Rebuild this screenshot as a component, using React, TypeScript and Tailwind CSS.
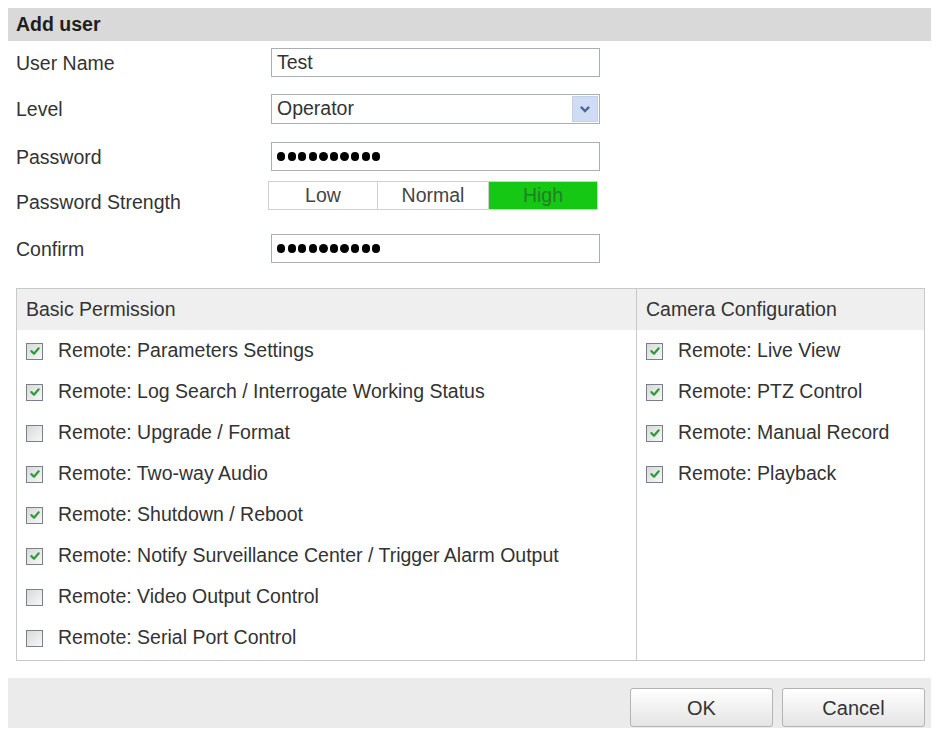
import React from "react";

const basic: [string, boolean][] = [
  ["Remote: Parameters Settings", true],
  ["Remote: Log Search / Interrogate Working Status", true],
  ["Remote: Upgrade / Format", false],
  ["Remote: Two-way Audio", true],
  ["Remote: Shutdown / Reboot", true],
  ["Remote: Notify Surveillance Center / Trigger Alarm Output", true],
  ["Remote: Video Output Control", false],
  ["Remote: Serial Port Control", false],
];

const camera: [string, boolean][] = [
  ["Remote: Live View", true],
  ["Remote: PTZ Control", true],
  ["Remote: Manual Record", true],
  ["Remote: Playback", true],
];

function CheckBox({ checked }: { checked: boolean }) {
  return (
    <span className="flex h-[17px] w-[17px] shrink-0 items-center justify-center border border-[#75818f] bg-linear-to-br from-[#d9d9d9] to-[#f7f7f7]">
      {checked && (
        <svg viewBox="0 0 12 12" className="h-[12px] w-[12px]">
          <path d="M2.4 6.1 L5 8.7 L9.7 3.3" fill="none" stroke="#2e9b3b" strokeWidth="2.2" strokeLinecap="round" strokeLinejoin="round" />
        </svg>
      )}
    </span>
  );
}

function Dots() {
  return (
    <div className="flex items-center gap-[2.4px] pl-[5px]">
      {Array.from({ length: 10 }).map((_, i) => (
        <span key={i} className="h-[8.2px] w-[8.2px] rounded-full bg-black" />
      ))}
    </div>
  );
}

function PermRow({ label, checked }: { label: string; checked: boolean }) {
  return (
    <div className="flex h-[41px] items-center gap-[15px] pl-[9px] pt-[1px]">
      <CheckBox checked={checked} />
      <span>{label}</span>
    </div>
  );
}

export default function App() {
  return (
    <div className="min-h-[731px] w-[937px] bg-white font-['Liberation_Sans',Arial,sans-serif] text-[19.5px] text-[#333]">
      <div className="pt-2">
        <div className="ml-2 flex h-[33px] w-[923px] items-center bg-[#d9d9d9] pl-2 font-bold text-[#1e1e1e]">
          Add user
        </div>
      </div>

      <div className="pl-4">
        <div className="mt-[7px] flex h-[29px] items-center">
          <span className="w-[255px] pt-[2px]">User Name</span>
          <div className="flex h-[29px] w-[329px] items-center border border-[#a9aeb4] pl-[5px]">Test</div>
        </div>

        <div className="mt-[17px] flex h-[30px] items-center">
          <span className="w-[255px] pt-[2px]">Level</span>
          <div className="flex h-[30px] w-[329px] items-center justify-between border border-[#a9aeb4] pl-[5px] pr-[1px]">
            <span>Operator</span>
            <span className="flex h-[26px] w-[26px] items-center justify-center border border-[#c3d0ea] bg-[#d0dcf3]">
              <svg viewBox="0 0 10 10" className="h-[12px] w-[12px]">
                <path d="M1.6 3.3 L5 6.7 L8.4 3.3" fill="none" stroke="#4a6698" strokeWidth="2" />
              </svg>
            </span>
          </div>
        </div>

        <div className="mt-[18px] flex h-[29px] items-center">
          <span className="w-[255px] pt-[2px]">Password</span>
          <div className="flex h-[29px] w-[329px] items-center border border-[#a9aeb4]">
            <Dots />
          </div>
        </div>

        <div className="mt-[10px] flex h-[40px] items-center">
          <span className="w-[252px] pt-[4px]">Password Strength</span>
          <div className="flex h-[29px] self-start border border-[#d0d0d0] text-[#444]">
            <span className="flex w-[109px] items-center justify-center border-r border-[#d0d0d0] bg-white pt-[1px]">Low</span>
            <span className="flex w-[111px] items-center justify-center border-r border-[#d0d0d0] bg-white pt-[1px]">Normal</span>
            <span className="flex w-[108px] items-center justify-center bg-[#14c814] pt-[1px] text-[#257f25]">High</span>
          </div>
        </div>

        <div className="mt-[13px] flex h-[29px] items-center">
          <span className="w-[255px] pt-[2px]">Confirm</span>
          <div className="flex h-[29px] w-[329px] items-center border border-[#a9aeb4]">
            <Dots />
          </div>
        </div>

        <div className="mt-[25px] flex h-[373px] w-[909px] border border-[#c9c9c9]">
          <div className="w-[620px] border-r border-[#c9c9c9]">
            <div className="flex h-[41px] items-center bg-[#efefef] pl-[9px]">Basic Permission</div>
            {basic.map(([label, checked]) => (
              <PermRow key={label} label={label} checked={checked} />
            ))}
          </div>
          <div className="flex-1">
            <div className="flex h-[41px] items-center bg-[#efefef] pl-[9px]">Camera Configuration</div>
            {camera.map(([label, checked]) => (
              <PermRow key={label} label={label} checked={checked} />
            ))}
          </div>
        </div>
      </div>

      <div className="ml-2 mt-[17px] flex h-[50px] w-[923px] items-start justify-end gap-[9px] bg-[#ebebeb] pr-[6px] pt-[10px]">
        <button className="flex h-[39px] w-[143px] items-center justify-center rounded-[3px] border border-[#b3b3b3] bg-linear-to-b from-white to-[#e4e4e4] text-[20px] text-[#333]">
          OK
        </button>
        <button className="flex h-[39px] w-[143px] items-center justify-center rounded-[3px] border border-[#b3b3b3] bg-linear-to-b from-white to-[#e4e4e4] text-[20px] text-[#333]">
          Cancel
        </button>
      </div>
    </div>
  );
}
